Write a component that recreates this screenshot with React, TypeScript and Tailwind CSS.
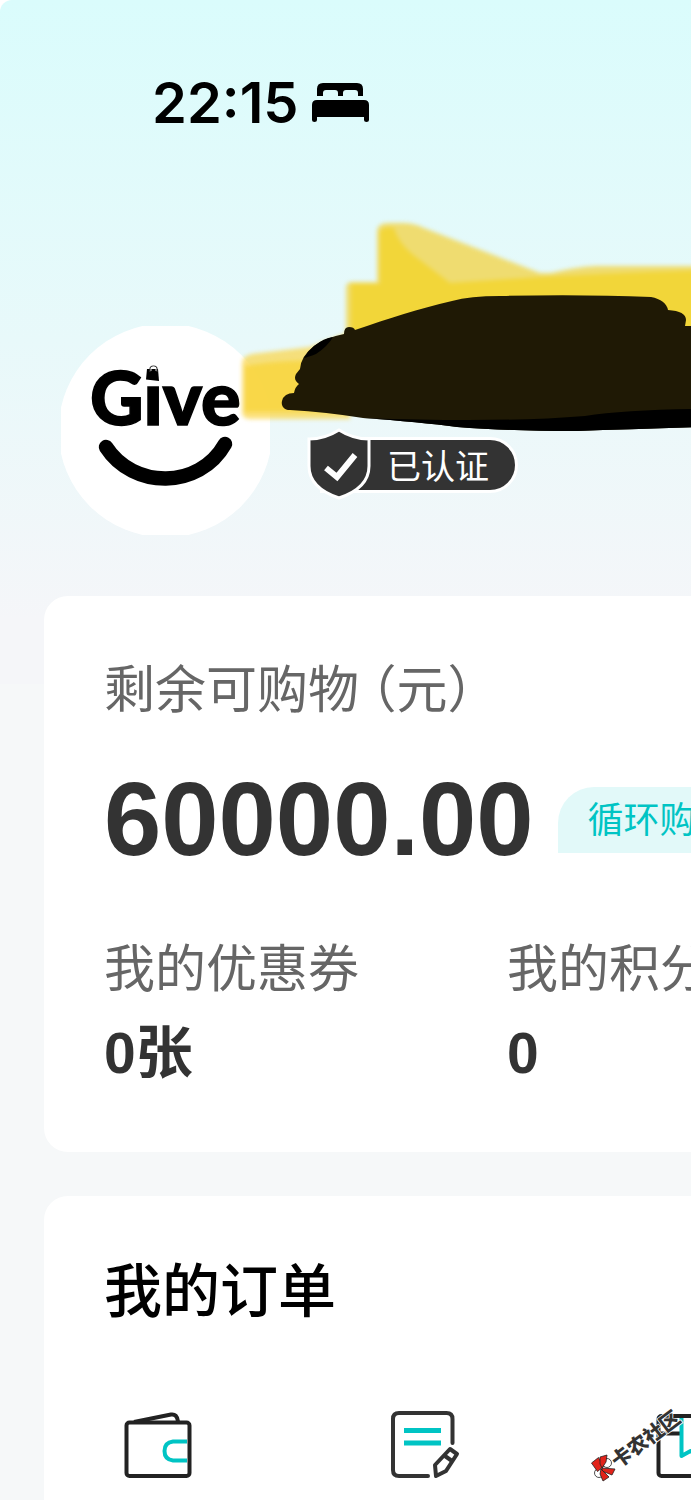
import React from 'react';

const StatusBar = () => (
  <div className="flex h-[206px] items-start gap-3 pl-38 pt-[71px]">
    <span className="font-[Inter] text-[56px] font-semibold leading-16">22:15</span>
    <svg className="mt-2 h-12 w-15" viewBox="311 79 60 48" aria-hidden="true">
      <path d="M317 96V89q0-6 6-6h34q6 0 6 6v7h-5v-3q0-3-3-3h-9q-3 0-3 3v3h-5v-3q0-3-3-3h-9q-3 0-3 3v3Z" />
      <path d="M312 120v-15q0-5 5-5h47q5 0 5 5v15q0 2-2.500 2t-2.500-2v-3h-47v3q0 2-2.500 2t-2.500-2Z" />
    </svg>
  </div>
);

const Avatar = () => (
  <svg className="h-[209px] w-[209px] shrink-0" viewBox="61 326 209 209" role="img" aria-label="Give">
    <circle cx="165.500" cy="430.500" r="107" fill="#fff" />
    <text
      x="90"
      y="425"
      fontFamily="Lato, sans-serif"
      fontWeight="900"
      fontSize="74"
      stroke="#000"
      strokeWidth="1.500"
    >
      Give
    </text>
    <rect x="144" y="362" width="17" height="23" fill="#fff" />
    <path d="M147 369h11l1 12-13-1.500Z" />
    <path d="M150 372v-3q0-3 3.500-3t3.500 3v3" fill="none" stroke="#333" strokeWidth="1.200" />
    <path d="M151 371v-2q0-2 2.500-2t2.500 2v2" fill="none" stroke="#fff" strokeWidth=".8" />
    <path d="M106 447C133 489 199 490 225 444" fill="none" stroke="#000" strokeWidth="14.500" strokeLinecap="round" />
  </svg>
);

const Scribble = () => (
  <svg className="pointer-events-none absolute left-[230px] top-[210px] h-[230px] w-[461px]" viewBox="230 210 461 230" aria-hidden="true">
    <defs>
      <filter id="soft" x="-10%" y="-10%" width="120%" height="120%" colorInterpolationFilters="sRGB">
        <feGaussianBlur stdDeviation="2" />
      </filter>
      <filter id="edge" colorInterpolationFilters="sRGB">
        <feGaussianBlur stdDeviation=".5" />
      </filter>
    </defs>
    <g filter="url(#soft)">
      <path d="M377 232q0-9 12-9h13q12 0 22 5L540 273l11 0q24-6 45-7H720V400H346V288q0-6 6-6h25Z" fill="#efdc70" />
      <path d="M380 232q2-6 14-4 4 14 18 26l38 29 90-6 60-3q60-3 120-4V400H351V284h29Z" fill="#f2d639" />
      <path d="M242 364q0-8 10-10l58-7 40-15v87H250q-8 0-8-7Z" fill="#fbd445" fillOpacity=".7" />
      <path d="M245 366q30-6 105-6v52H245Z" fill="#f8d437" fillOpacity=".75" />
    </g>
    <g filter="url(#edge)">
      <path d="M290 410C283 410 281 405 282 401Q284 393 294 393Q295 387 299 384Q293 380 296 374L300 369Q301 356 314 346Q324 338 344 334Q344 327 349 327Q354 327 355 330C390 318 418 309 452 301Q470 296 500 296Q580 294 651 297Q666 300 668 310Q686 311 686 320L685 326H700V427Q630 429 577 431Q508 431 457 427Q420 422 363 418Q326 412 290 410Z" fill="#1f1905" />
      <path d="M314 346Q324 338 333 337Q328 346 316 354Q308 357 304 358Q308 351 314 346Z" fill="#000" />
      <path d="M363 418Q500 423 585 416Q625 410 700 409V427Q630 429 577 431Q508 431 457 427Q420 422 363 418Z" fill="#000" />
    </g>
  </svg>
);

const VerifiedBadge = () => (
  <div className="relative mt-[111px] ml-[50px] flex h-14 w-[198px] items-center rounded-r-full border-3 border-white bg-[#333] pl-16">
    <svg className="absolute -left-4 -top-3 h-18 w-16" viewBox="307 428 64 72" aria-hidden="true">
      <path d="M309 439Q325 439 339 430Q353 439 369 439V466Q369 488 339 498Q309 488 309 466Z" fill="#333" stroke="#fff" strokeWidth="3" />
      <path d="M326 468l11 9 18-22" fill="none" stroke="#fff" strokeWidth="6" />
    </svg>
    <span className="mt-1 whitespace-nowrap text-[34px] leading-12 text-white">已认证</span>
  </div>
);

const WalletIcon = () => (
  <svg className="h-18 w-18" viewBox="122 1410 72 72" fill="none" strokeWidth="4" aria-hidden="true">
    <path d="M134 1422L171 1414.500q6-1 7 7" stroke="#222" />
    <rect x="126.500" y="1422.500" width="63" height="53.500" rx="3" stroke="#222" />
    <path d="M187 1441.500H173q-8.500 1-8.500 9.500t8.500 9.500h14" stroke="#00c4c4" />
  </svg>
);

const NoteIcon = () => (
  <svg className="h-18 w-18" viewBox="388 1410 72 72" fill="none" strokeWidth="4" aria-hidden="true">
    <path d="M452.500 1443V1419q0-6-6-6H399q-6 0-6 6v51q0 6 6 6h29" stroke="#333" strokeLinecap="round" />
    <path d="M404 1430.500h37M404 1443h37" stroke="#00c4c4" strokeWidth="5" />
    <path d="M450 1449l7 5-11 17-10 5-1-11Z" stroke="#333" strokeLinejoin="round" />
    <path d="M445 1456l7 5" stroke="#333" />
  </svg>
);

const ParcelIcon = () => (
  <svg className="h-18 w-18" viewBox="654 1410 72 72" fill="none" strokeWidth="4" aria-hidden="true">
    <rect x="658.500" y="1416" width="63" height="60" rx="3" stroke="#222" />
    <path d="M659 1433.500h22M700 1433.500h20" stroke="#222" />
    <path d="M681.500 1418v38l9-5 9 5v-38" stroke="#00c4c4" strokeLinejoin="round" />
  </svg>
);

const Watermark = () => (
  <svg className="pointer-events-none absolute bottom-0 left-[580px] h-[110px] w-[111px]" viewBox="580 1390 111 110" aria-hidden="true">
    <g stroke="#222" strokeWidth=".8">
      <circle cx="607" cy="1463" r="4.500" fill="#fff" />
      <circle cx="599" cy="1473" r="4.500" fill="#fff" />
      <path d="M591.500 1463l7-5.500 5 9-6 5Z" fill="#e2231a" />
      <path d="M600 1457l7-2-1 7-4 6-2-4Z" fill="#e2231a" />
      <path d="M602 1468l13 1-3 6-10-4Z" fill="#e2231a" />
      <path d="M601 1469l8 8-6 4-3-7Z" fill="#e2231a" />
    </g>
    <text
      transform="translate(618 1469) rotate(-37)"
      fontFamily="Noto Sans CJK SC, sans-serif"
      fontWeight="900"
      fontSize="20"
      fill="#333"
      stroke="#fff"
      strokeWidth="1.500"
      paintOrder="stroke"
    >
      卡农社区
    </text>
  </svg>
);

const stats = [
  { label: '我的优惠券', value: '0', unit: '张' },
  { label: '我的积分', value: '0', unit: '' },
];

const orders = [
  { name: '待付款', icon: <WalletIcon /> },
  { name: '待发货', icon: <NoteIcon /> },
  { name: '待收货', icon: <ParcelIcon /> },
];

const App = () => {
  return (
    <div className="bg-white">
      <div className="relative flex min-h-screen flex-col overflow-hidden rounded-tl-xl bg-[#f6f8f9] bg-[linear-gradient(#dafcfc,#e8f9fa_340px,#f5f6f9_620px,#f5f6f9_684px,#f6f8f9_684px)] font-['Liberation_Sans','Noto_Sans_CJK_SC',sans-serif] text-black">
        <StatusBar />

        <header className="flex h-[390px] items-start pl-[61px] pt-30">
          <Avatar />
          <VerifiedBadge />
        </header>
        <Scribble />

        <main className="flex flex-1 flex-col gap-11 pl-11">
          <section className="overflow-hidden rounded-l-3xl bg-white pb-[59px] pl-15 pt-[50px]">
            <div className="flex h-20 items-center whitespace-nowrap font-['Noto_Sans_CJK_SC',sans-serif] text-[51px] leading-20 text-[#666]">
              <span>剩余可购物</span>
              <span className="ml-3 [font-feature-settings:'halt']">（元）</span>
            </div>
            <div className="mt-[34px] flex h-30 items-center">
              <strong className="text-[103px] leading-30 text-[#333]">60000.00</strong>
              <span className="ml-6 h-[66px] shrink-0 whitespace-nowrap rounded-t-[36px] bg-[#e2f9f9] px-[30px] text-[36px] leading-[68px] text-[#00c4c4]">
                循环购物
              </span>
            </div>
            <dl className="mt-[50px] grid grid-cols-[403px_403px]">
              {stats.map((item) => (
                <div key={item.label}>
                  <dt className="h-20 whitespace-nowrap text-[51px] leading-20 text-[#666]">{item.label}</dt>
                  <dd className="mt-[3px] h-20 text-[57px] font-bold leading-20 text-[#333]">
                    {item.value}
                    {item.unit}
                  </dd>
                </div>
              ))}
            </dl>
          </section>

          <section className="flex-1 overflow-hidden rounded-tl-3xl bg-white pt-14">
            <h2 className="h-20 pl-15 text-[58px] font-medium leading-20">我的订单</h2>
            <div className="mt-[78px] flex gap-[194px] pl-[78px]">
              {orders.map((order) => (
                <button key={order.name} type="button" aria-label={order.name} className="shrink-0">
                  {order.icon}
                </button>
              ))}
            </div>
          </section>
        </main>
        <Watermark />
      </div>
    </div>
  );
};

export default App;
